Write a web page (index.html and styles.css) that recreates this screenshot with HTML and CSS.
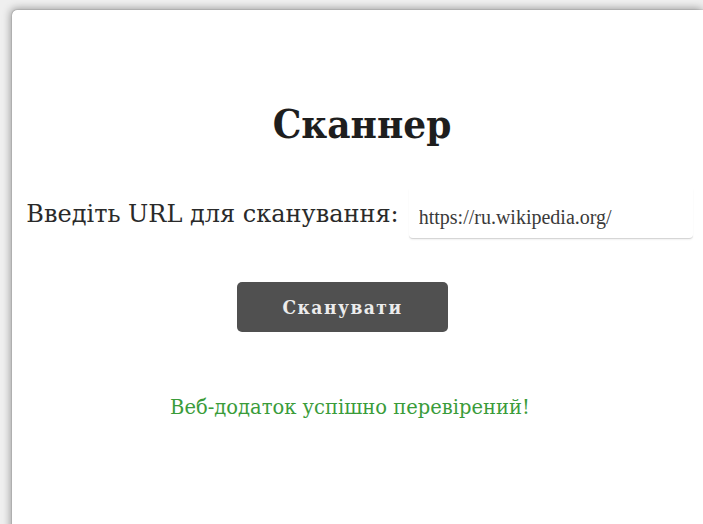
FILE: index.html
```html
<!DOCTYPE html>
<html lang="uk">
<head>
<meta charset="utf-8">
<title>Сканнер</title>
<link rel="stylesheet" href="styles.css">
</head>
<body>
<main class="card">
  <h1 class="title">Сканнер</h1>
  <form class="scan-form">
    <div class="url-row">
      <label class="url-label" for="url">Введіть URL для сканування:</label>
      <input class="url-input" id="url" type="text" value="https://ru.wikipedia.org/">
    </div>
    <button class="scan-btn" type="button">Сканувати</button>
  </form>
  <p class="status">Веб-додаток успішно перевірений!</p>
</main>
</body>
</html>
```
FILE: styles.css
```css
html, body {
  margin: 0;
  height: 100%;
}
body {
  background: #efefef;
  overflow: hidden;
  font-family: "DejaVu Serif", "Liberation Serif", serif;
  color: #222;
}
.card {
  margin: 10px 0 0 12px;
  width: 691px;
  height: 560px;
  background: #fff;
  border-radius: 5px 0 0 0;
  box-shadow: -1px -1px 8px rgba(0, 0, 0, 0.4), 0 0 1px rgba(0, 0, 0, 0.6);
  display: flex;
  flex-direction: column;
  align-items: center;
  box-sizing: border-box;
  padding-top: 88px;
}
.title {
  margin: 0 0 0 9px;
  font-size: 40px;
  font-weight: bold;
  font-stretch: condensed;
  line-height: 52px;
  color: #1e1e1e;
}
.scan-form {
  display: flex;
  flex-direction: column;
  align-items: center;
  margin-top: 39px;
}
.url-row {
  display: flex;
  align-items: center;
  gap: 10px;
  margin-left: 4px;
}
.url-label {
  font-size: 24px;
  color: #2a2a2a;
}
.url-input {
  width: 284px;
  height: 50px;
  box-sizing: border-box;
  border: none;
  border-bottom: 1px solid #d6d6d6;
  border-radius: 0 0 4px 4px;
  box-shadow: 0 1px 2px rgba(0, 0, 0, 0.06);
  padding: 7px 10px 0;
  font-family: "Liberation Serif", serif;
  font-size: 20px;
  color: #3a3a3a;
  outline: none;
}
.scan-btn {
  margin: 43px 30px 0 0;
  width: 211px;
  height: 50px;
  background: #505050;
  color: #ececec;
  border: none;
  border-radius: 5px;
  font-family: inherit;
  font-size: 19px;
  font-weight: bold;
  font-stretch: condensed;
  letter-spacing: 1.5px;
}
.status {
  margin: 64px 15px 0 0;
  font-size: 19.5px;
  color: #3a9c3a;
}
```
